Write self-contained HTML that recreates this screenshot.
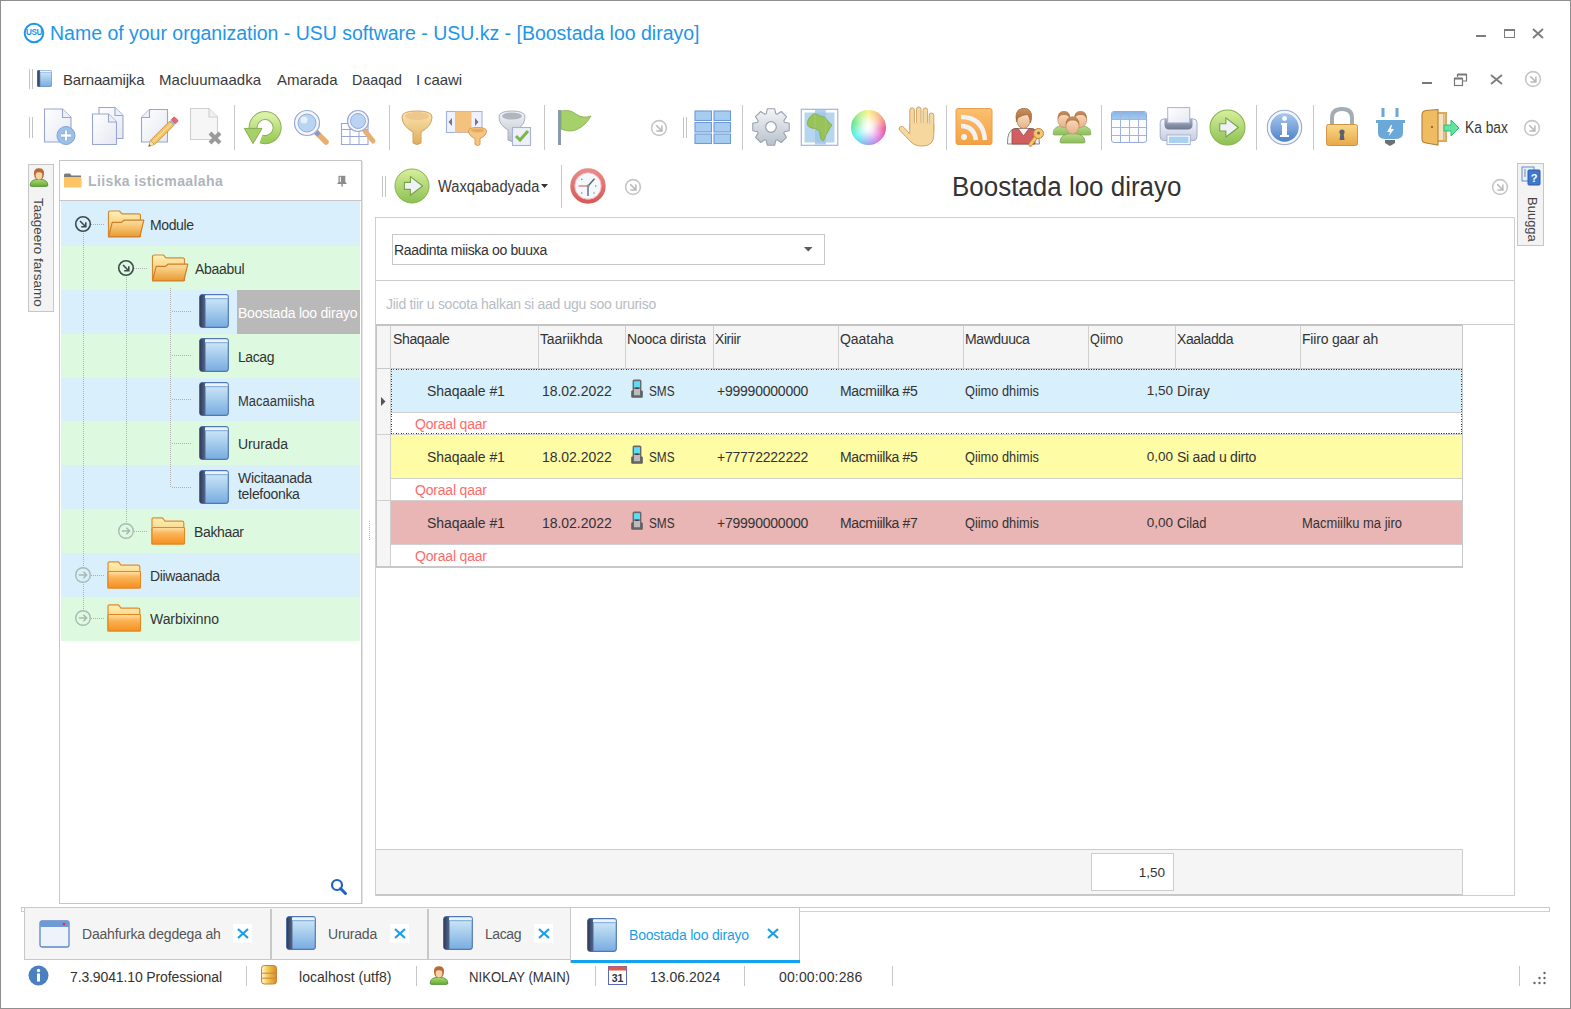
<!DOCTYPE html>
<html><head><meta charset="utf-8"><style>
*{margin:0;padding:0;box-sizing:border-box}
html,body{width:1571px;height:1009px;overflow:hidden;background:#fff}
body{position:relative;font-family:"Liberation Sans",sans-serif;font-size:13.5px;color:#3a3a3a}
.a{position:absolute}
.t{position:absolute;white-space:nowrap;line-height:1}
.sep{position:absolute;width:1px;background:#c8c8c8}
.grip{position:absolute;width:4px;border-left:1px solid #c4c4c4;border-right:1px solid #c4c4c4}
.vdot{position:absolute;width:1px;background:repeating-linear-gradient(#b0b0b0 0 1px,transparent 1px 2px)}
.hdot{position:absolute;height:1px;background:repeating-linear-gradient(90deg,#b0b0b0 0 1px,transparent 1px 2px)}
.hl{position:absolute;height:1px;background:#cdcdcd}
.vl{position:absolute;width:1px;background:#cdcdcd}
</style></head><body>
<svg width="0" height="0" style="position:absolute">
<defs>
<linearGradient id="gBook" x1="0" y1="0" x2="0" y2="1"><stop offset="0" stop-color="#d4ecfa"/><stop offset="1" stop-color="#78ace0"/></linearGradient>
<linearGradient id="gSpine" x1="0" y1="0" x2="1" y2="0"><stop offset="0" stop-color="#2e3a58"/><stop offset="1" stop-color="#55688e"/></linearGradient>
<linearGradient id="gFoldBack" x1="0" y1="0" x2="0" y2="1"><stop offset="0" stop-color="#fff2b8"/><stop offset="1" stop-color="#f0b452"/></linearGradient>
<linearGradient id="gFoldFront" x1="0" y1="0" x2="0" y2="1"><stop offset="0" stop-color="#fde0a0"/><stop offset="1" stop-color="#e99a32"/></linearGradient>
<linearGradient id="gFoldFront2" x1="0" y1="0" x2="0" y2="1"><stop offset="0" stop-color="#ffe2a8"/><stop offset="0.35" stop-color="#fbb458"/><stop offset="1" stop-color="#f59020"/></linearGradient>
<linearGradient id="gGreen" x1="0" y1="0" x2="0" y2="1"><stop offset="0" stop-color="#d8ef9c"/><stop offset="1" stop-color="#8cc054"/></linearGradient>
<radialGradient id="gWheel" cx="0.5" cy="0.5" r="0.5"><stop offset="0" stop-color="#fff"/><stop offset="1" stop-color="#fff" stop-opacity="0"/></radialGradient>
<linearGradient id="gGold" x1="0" y1="0" x2="0" y2="1"><stop offset="0" stop-color="#fbe6b4"/><stop offset="1" stop-color="#e2ad5c"/></linearGradient>
<linearGradient id="gSilver" x1="0" y1="0" x2="0" y2="1"><stop offset="0" stop-color="#f4f6f8"/><stop offset="1" stop-color="#b8c0ca"/></linearGradient>
<linearGradient id="gPaper" x1="0" y1="0" x2="1" y2="1"><stop offset="0" stop-color="#ffffff"/><stop offset="1" stop-color="#e4e8f2"/></linearGradient>
<linearGradient id="gBlueBall" x1="0" y1="0" x2="0" y2="1"><stop offset="0" stop-color="#a8c8ee"/><stop offset="1" stop-color="#4f82c8"/></linearGradient>
<linearGradient id="gLock" x1="0" y1="0" x2="0" y2="1"><stop offset="0" stop-color="#f8d888"/><stop offset="1" stop-color="#e8a848"/></linearGradient>
<linearGradient id="gRss" x1="0" y1="0" x2="0" y2="1"><stop offset="0" stop-color="#fbc070"/><stop offset="1" stop-color="#f5a040"/></linearGradient>

<symbol id="book" viewBox="0 0 30 34">
 <rect x="0.7" y="0.7" width="28.6" height="32.6" rx="2.5" fill="url(#gBook)" stroke="#4f78b6" stroke-width="1.2"/>
 <path d="M0.7 3.2Q0.7 0.7 3.2 0.7H6.5V33.3H3.2Q0.7 33.3 0.7 30.8Z" fill="url(#gSpine)"/>
 <rect x="6" y="1.6" width="22.6" height="2.6" fill="#eef2f6"/>
 <rect x="6" y="4.2" width="22.6" height="1" fill="#7ea8d8"/>
</symbol>

<symbol id="folderOpen" viewBox="0 0 38 28">
 <path d="M1.5 26.5V3Q1.5 1 3.5 1H12.5L15 3.8H31.5Q33.5 3.8 33.5 5.8V26.5Z" fill="url(#gFoldBack)" stroke="#d38a32" stroke-width="1.2"/>
 <path d="M1.5 26.8L5.2 12.3H14.5L17 10.2H36.8L32.8 26.8Z" fill="url(#gFoldFront)" stroke="#d07f28" stroke-width="1.2" stroke-linejoin="round"/>
</symbol>

<symbol id="folder" viewBox="0 0 34 28">
 <path d="M1 27V2.5Q1 0.8 2.7 0.8H11.5L14 4.2H31Q32.8 4.2 32.8 6V27Z" fill="url(#gFoldBack)" stroke="#e38a2c" stroke-width="1.2"/>
 <rect x="1" y="10.5" width="32.6" height="16.5" rx="1.2" fill="url(#gFoldFront2)" stroke="#e5861e" stroke-width="1.2"/>
</symbol>

<symbol id="expDark" viewBox="0 0 18 18">
 <circle cx="9" cy="9" r="7.3" fill="none" stroke="#3e4a4c" stroke-width="1.6"/>
 <path d="M6 6L11.2 11.2M11.8 7.2V11.8H7.2" fill="none" stroke="#3e4a4c" stroke-width="1.6"/>
</symbol>
<symbol id="expLight" viewBox="0 0 18 18">
 <circle cx="9" cy="9" r="7.3" fill="none" stroke="#a9b9b2" stroke-width="1.4"/>
 <path d="M4.8 9H12.5M9.4 5.8L12.6 9L9.4 12.2" fill="none" stroke="#a9b9b2" stroke-width="1.5"/>
</symbol>
<symbol id="circArrow" viewBox="0 0 18 18">
 <circle cx="9" cy="9" r="7.4" fill="none" stroke="#c6c6c6" stroke-width="1.6"/>
 <path d="M6.2 6.2L11.4 11.4M11.9 6.4V11.9H6.4" fill="none" stroke="#b8b8b8" stroke-width="1.5"/>
</symbol>

<symbol id="greenArrow" viewBox="0 0 36 36">
 <circle cx="18" cy="18" r="17" fill="url(#gGreen)" stroke="#84b44c" stroke-width="1"/>
 <path d="M10.4 14.4H16.4V8.6L28.6 18L16.4 27.2V21.4H10.4Z" fill="#eef1f6" stroke="#79a247" stroke-width="1.1" stroke-linejoin="round"/>
</symbol>

<symbol id="clock" viewBox="0 0 36 36">
 <defs><linearGradient id="gRing" x1="0" y1="0" x2="0" y2="1"><stop offset="0" stop-color="#e98a88"/><stop offset="1" stop-color="#d95a58"/></linearGradient></defs>
 <circle cx="18" cy="18" r="15.5" fill="#f4f7fb" stroke="url(#gRing)" stroke-width="4.4"/>
 <circle cx="18" cy="18" r="13.2" fill="none" stroke="#f3b8b6" stroke-width="0.9"/>
 <path d="M18 18L24.5 10.8" stroke="#556270" stroke-width="1.3"/>
 <path d="M18 18V28" stroke="#8a94a0" stroke-width="2"/>
 <path d="M8.5 18H18" stroke="#e06a6a" stroke-width="1.2"/>
 <circle cx="18" cy="18" r="1.5" fill="#8a94a0"/>
 <g fill="#6a7888"><circle cx="11.8" cy="11.2" r="0.7"/><circle cx="25.8" cy="18" r="0.7"/><circle cx="11.8" cy="25" r="0.7"/><circle cx="24" cy="25" r="0.7"/></g>
</symbol>

<symbol id="user" viewBox="0 0 20 20">
 <defs><linearGradient id="gUB" x1="0" y1="0" x2="0" y2="1"><stop offset="0" stop-color="#a8dc6c"/><stop offset="1" stop-color="#68a83c"/></linearGradient></defs>
 <path d="M1.2 18.2Q1.2 12.2 10 12.2Q18.8 12.2 18.8 18.2Q18.8 19.4 17 19.4H3Q1.2 19.4 1.2 18.2Z" fill="url(#gUB)" stroke="#4e8a2a" stroke-width="0.8"/>
 <path d="M5 7Q4.5 1.2 10 1.2Q15.5 1.2 15 7Q15 11 12.5 12.8H7.5Q5 11 5 7Z" fill="#b86a34"/>
 <ellipse cx="10" cy="8.2" rx="3.3" ry="4.2" fill="#f6d2a8"/>
 <path d="M6.5 6.5Q7 3.5 10 3.6Q13 3.5 13.5 6.5Q12 5 10 5.2Q8 5 6.5 6.5Z" fill="#b86a34"/>
</symbol>
</defs></svg>
<svg width="0" height="0" style="position:absolute"><defs>
<symbol id="phone" viewBox="0 0 12 19">
 <rect x="0.2" y="11.5" width="11.6" height="7.3" rx="1" fill="#5e5e5e"/>
 <rect x="1.6" y="0.4" width="8.8" height="17.4" rx="1.6" fill="#686868"/>
 <rect x="3" y="2.2" width="6" height="6.2" fill="#5cdcf8"/>
 <rect x="3" y="9.8" width="6" height="6.4" fill="#bcbcbc"/>
 <rect x="4.3" y="8.6" width="3.4" height="1.3" fill="#3a3a3a"/>
</symbol>
<symbol id="winIcon" viewBox="0 0 31 28">
 <rect x="1" y="1" width="29" height="26" rx="2" fill="#eef2fa" stroke="#5f86c6" stroke-width="1.3"/>
 <path d="M1 3Q1 1 3 1H28Q30 1 30 3V7H1Z" fill="#6f9ad8"/>
 <circle cx="25" cy="4" r="1.3" fill="#e83030"/>
</symbol>
</defs></svg>

<div class="a" style="left:0;top:0;width:1571px;height:1009px;border:1px solid #8f8f8f"></div>
<svg class="a" style="left:23px;top:22px" width="22" height="22" viewBox="0 0 22 22"><circle cx="11" cy="11" r="9.3" fill="none" stroke="#1e96e8" stroke-width="2"/><text x="11" y="13.4" font-family="Liberation Sans" font-weight="bold" font-size="8.2" letter-spacing="-0.4" fill="#1e96e8" text-anchor="middle">USU</text></svg>
<div class="t" style="left:50px;top:24px;font-size:19.5px;color:#1e96e8;letter-spacing:-0.011px">Name of your organization - USU software - USU.kz - [Boostada loo dirayo]</div>
<div class="a" style="left:1476px;top:35px;width:10px;height:2px;background:#7c7c7c"></div>
<div class="a" style="left:1504px;top:29px;width:11px;height:9px;border:1px solid #7c7c7c;border-top-width:2px"></div>
<svg class="a" style="left:1532px;top:28px" width="12" height="11"><path d="M1 1L11 10M11 1L1 10" stroke="#7c7c7c" stroke-width="1.8"/></svg>
<div class="grip" style="left:29px;top:69px;height:20px"></div>
<svg class="a" style="left:37px;top:70px" width="15" height="17"><use href="#book"/></svg>
<div class="t" style="left:63px;top:72px;font-size:15px;letter-spacing:-0.188px">Barnaamijka</div>
<div class="t" style="left:159px;top:72px;font-size:15px;letter-spacing:0.026px">Macluumaadka</div>
<div class="t" style="left:277px;top:72px;font-size:15px;letter-spacing:-0.062px">Amarada</div>
<div class="t" style="left:352px;top:72px;font-size:15px;transform:scaleX(0.9501);transform-origin:0 0">Daaqad</div>
<div class="t" style="left:416px;top:72px;font-size:15px;letter-spacing:-0.115px">I caawi</div>
<div class="a" style="left:1422px;top:82px;width:10px;height:2px;background:#777"></div>
<svg class="a" style="left:1453px;top:73px" width="15" height="14"><path d="M4.5 4V1.5h9v6.5h-3.5" fill="none" stroke="#777" stroke-width="1.2"/><path d="M4.5 1.5h9" stroke="#777" stroke-width="2"/><rect x="1.5" y="5.5" width="8" height="7" fill="none" stroke="#777" stroke-width="1.2"/><path d="M1.5 5.5h8" stroke="#777" stroke-width="2"/></svg>
<svg class="a" style="left:1490px;top:74px" width="13" height="11"><path d="M1 1L12 10M12 1L1 10" stroke="#7c7c7c" stroke-width="1.8"/></svg>
<svg class="a" style="left:1524px;top:70px" width="18" height="18"><use href="#circArrow"/></svg>
<div class="grip" style="left:29px;top:117px;height:21px"></div>
<!-- new doc -->
<svg class="a" style="left:43px;top:106px" width="36" height="42" viewBox="0 0 36 42"><path d="M1.5 3H19.5L28 11.5V36H1.5Z" fill="url(#gPaper)" stroke="#9aa6d0" stroke-width="1.1"/><path d="M19.5 3V11.5H28" fill="#eef0f8" stroke="#9aa6d0" stroke-width="1.1"/><circle cx="23" cy="29.5" r="9" fill="#9cc0ea" stroke="#7aa4d8" stroke-width="1"/><path d="M23 24.5V34.5M18 29.5H28" stroke="#7aa4d8" stroke-width="4"/><path d="M23 24.5V34.5M18 29.5H28" stroke="#fff" stroke-width="2.4"/></svg>
<!-- copy -->
<svg class="a" style="left:91px;top:106px" width="36" height="42" viewBox="0 0 36 42"><path d="M8 1.5H24L32 9.5V32.5H8Z" fill="url(#gPaper)" stroke="#9aa6d0" stroke-width="1.1"/><path d="M24 1.5V9.5H32" fill="#eef0f8" stroke="#9aa6d0" stroke-width="1.1"/><path d="M1.5 8H17.5L25.5 16V38.5H1.5Z" fill="url(#gPaper)" stroke="#9aa6d0" stroke-width="1.1"/><path d="M17.5 8V16H25.5" fill="#eef0f8" stroke="#9aa6d0" stroke-width="1.1"/></svg>
<!-- edit -->
<svg class="a" style="left:140px;top:106px" width="40" height="44" viewBox="0 0 40 44"><path d="M9.5 3.5H27.5V36H1.5V11.5Z" fill="url(#gPaper)" stroke="#9aa6d0" stroke-width="1.1"/><path d="M1.5 11.5H9.5V3.5" fill="#eef0f8" stroke="#9aa6d0" stroke-width="1.1"/><path d="M10.4 34.4L29.6 15.2L33.8 19.4L14.6 38.6Z" fill="#f2c464" stroke="#c8903c" stroke-width="0.9"/><path d="M12.5 36.5L31.7 17.3" stroke="#f8dc98" stroke-width="1.2"/><path d="M29.6 15.2L31.4 13.4L35.6 17.6L33.8 19.4Z" fill="#9ab2d8"/><path d="M31.4 13.4L33.2 11.6Q34.2 10.6 35.3 11.7L37.3 13.7Q38.4 14.8 37.4 15.8L35.6 17.6Z" fill="#e86a6a" stroke="#c85050" stroke-width="0.8"/><path d="M10.4 34.4L14.6 38.6L8.6 40.4Z" fill="#f4e0b8" stroke="#b89060" stroke-width="0.6"/><path d="M9.3 38.2L10.8 39.7L8.6 40.4Z" fill="#555"/></svg>
<!-- delete -->
<svg class="a" style="left:189px;top:106px" width="36" height="40" viewBox="0 0 36 40"><path d="M1.5 2.5H20L28.5 11V33.5H1.5Z" fill="#f6f6f6" stroke="#cfcfcf" stroke-width="1.1"/><path d="M20 2.5V11H28.5" fill="#f0f0f0" stroke="#cfcfcf" stroke-width="1.1"/><path d="M21 27L31 37M31 27L21 37" stroke="#9a9a9a" stroke-width="4"/></svg>
<!-- refresh -->
<svg class="a" style="left:238px;top:106px" width="50" height="44" viewBox="0 0 50 44"><defs><linearGradient id="gRef" x1="0" y1="0" x2="0" y2="1"><stop offset="0" stop-color="#dcf0a8"/><stop offset="1" stop-color="#9ccc5c"/></linearGradient></defs><path d="M15.2 23A12 12 0 1 1 23.1 32.9" fill="none" stroke="#8cb456" stroke-width="9"/><path d="M15.2 23A12 12 0 1 1 23.1 32.9" fill="none" stroke="url(#gRef)" stroke-width="7"/><path d="M6.3 22.4H24L15 37.6Z" fill="#a6d06a" stroke="#86ae50" stroke-width="1" stroke-linejoin="round"/></svg>
<!-- magnifier -->
<svg class="a" style="left:293px;top:109px" width="38" height="38" viewBox="0 0 38 38"><path d="M23 23L33 33" stroke="#e8b070" stroke-width="5.5" stroke-linecap="round"/><path d="M22 22L26 26" stroke="#8a9ac8" stroke-width="5"/><circle cx="14" cy="14" r="12.5" fill="#f4f6fa" stroke="#9aa8d2" stroke-width="1.2"/><circle cx="14" cy="14" r="9" fill="#b8d4f2" stroke="#8eaedc" stroke-width="1"/><circle cx="11" cy="11" r="3.5" fill="#e6f0fb"/></svg>
<!-- grid magnifier -->
<svg class="a" style="left:340px;top:109px" width="40" height="38" viewBox="0 0 40 38"><path d="M1.5 14.5H28V35.5H1.5Z" fill="#fff" stroke="#9aa6d8" stroke-width="1.1"/><path d="M1.5 20.5H28M1.5 27.5H28M10 14.5V35.5M19 14.5V35.5" stroke="#9aa6d8" stroke-width="1"/><path d="M25 22L33 32" stroke="#e8b070" stroke-width="5" stroke-linecap="round"/><circle cx="18" cy="12" r="10.5" fill="#f4f6fa" stroke="#9aa8d2" stroke-width="1.2"/><circle cx="18" cy="12" r="7.5" fill="#b8d4f2" stroke="#8eaedc" stroke-width="1"/></svg>
<!-- funnel -->
<svg class="a" style="left:400px;top:109px" width="34" height="38" viewBox="0 0 34 38"><path d="M2 8Q2 2 17 2Q32 2 32 8Q32 17 21 23V34Q17 37 13 34V23Q2 17 2 8Z" fill="url(#gGold)" stroke="#d2a060" stroke-width="1"/><ellipse cx="17" cy="7" rx="12" ry="4" fill="#eec78a"/></svg>
<!-- column filter -->
<svg class="a" style="left:445px;top:110px" width="44" height="38" viewBox="0 0 44 38"><rect x="1.5" y="1.5" width="35.5" height="21" fill="#eef2fa" stroke="#a6b2dc" stroke-width="1.1"/><rect x="10" y="1.5" width="16.5" height="21" fill="#f2c27e"/><path d="M7 8V16L3.5 12Z M30 8V16L33.5 12Z" fill="#6a7890"/><path d="M23.5 21Q23.5 17.5 32.5 17.5Q41.5 17.5 41.5 21Q41.5 25.5 35 28.5V34.5Q32.5 36.5 30 34.5V28.5Q23.5 25.5 23.5 21Z" fill="#f5c680" stroke="#d89a50" stroke-width="1"/><ellipse cx="32.5" cy="20.5" rx="6.5" ry="1.8" fill="#e8a860"/></svg>
<!-- gray funnel check -->
<svg class="a" style="left:497px;top:108px" width="38" height="40" viewBox="0 0 38 40"><path d="M2 9Q2 3 15 3Q28 3 28 9Q28 17 19 22V32Q15 35 11 32V22Q2 17 2 9Z" fill="url(#gSilver)" stroke="#a8b0ba" stroke-width="1"/><ellipse cx="15" cy="8" rx="10" ry="3.6" fill="#aeb6c0"/><rect x="15.5" y="19.5" width="18" height="18" fill="#eef0f8" stroke="#a6b2dc" stroke-width="1.1"/><path d="M19 28L23 32L31 23" fill="none" stroke="#7ab648" stroke-width="3"/></svg>
<!-- flag -->
<svg class="a" style="left:556px;top:109px" width="38" height="38" viewBox="0 0 38 38"><rect x="2" y="1" width="3" height="35" fill="#8a98b4"/><path d="M5 2Q14 0 20 5Q27 10 35 7Q30 16 22 20Q15 24 5 20Z" fill="#a6d06a" stroke="#86b048" stroke-width="0.8"/></svg>
<!-- grid6 -->
<svg class="a" style="left:694px;top:110px" width="38" height="36" viewBox="0 0 38 36"><g fill="#a6cdf0" stroke="#6f9ad6" stroke-width="1.1"><rect x="1" y="1" width="16.5" height="9.5"/><rect x="20" y="1" width="16.5" height="9.5"/><rect x="1" y="12.5" width="16.5" height="9.5"/><rect x="20" y="12.5" width="16.5" height="9.5"/><rect x="1" y="24" width="16.5" height="9.5"/><rect x="20" y="24" width="16.5" height="9.5"/></g></svg>
<!-- gear -->
<svg class="a" style="left:751px;top:107px" width="40" height="41" viewBox="0 0 40 41"><path d="M15.26 6.61L16.30 1.77L23.70 1.77L24.74 6.61L26.12 7.19L30.28 4.50L35.50 9.72L32.81 13.88L33.39 15.26L38.23 16.30L38.23 23.70L33.39 24.74L32.81 26.12L35.50 30.28L30.28 35.50L26.12 32.81L24.74 33.39L23.70 38.23L16.30 38.23L15.26 33.39L13.88 32.81L9.72 35.50L4.50 30.28L7.19 26.12L6.61 24.74L1.77 23.70L1.77 16.30L6.61 15.26L7.19 13.88L4.50 9.72L9.72 4.50L13.88 7.19Z" fill="url(#gSilver)" stroke="#9aa2ae" stroke-width="1.1" stroke-linejoin="round"/><circle cx="20" cy="20" r="5.3" fill="#fff" stroke="#9aa2ae" stroke-width="1.2"/></svg>
<!-- map -->
<svg class="a" style="left:800px;top:107px" width="40" height="41" viewBox="0 0 40 41"><rect x="1.3" y="2.3" width="36.5" height="36" fill="#fff" stroke="#a6b2dc" stroke-width="1.2"/><rect x="4.5" y="5.5" width="30" height="30" fill="#b6d6f0"/><rect x="15" y="3" width="10.8" height="34.5" fill="#9cc4e6" opacity="0.8"/><path d="M7.7 14Q9 10 11.2 8.9Q13 6.5 15 6.7Q18 7.5 20.1 8.9Q23 9.5 24.6 10.2Q27 12 27.8 14Q30 16.5 31.9 17.8Q30.5 20.5 29 22.9Q27 26 25.8 28.6Q24.5 32 23.3 33.7Q21.5 33.5 20.7 31.2Q20 27 19.5 24.8Q17.5 22.2 15 21.6Q12 21.2 9.9 20.4Q7.5 19 7.4 17.2Z" fill="#98c25a" stroke="#82ac48" stroke-width="0.8"/><path d="M15 7V21.6M25.8 10.5V28.6" stroke="#c8e08c" stroke-width="0.6" opacity="0.5"/></svg>
<!-- color wheel -->
<div class="a" style="left:851px;top:110px;width:35px;height:35px;border-radius:50%;background:conic-gradient(from 0deg,#f8f070,#f8a070 50deg,#e8408a 95deg,#d860e0 140deg,#7aa8f0 190deg,#40f0f0 235deg,#50e070 290deg,#b8f080 330deg,#f8f070)"></div>
<div class="a" style="left:851px;top:110px;width:35px;height:35px;border-radius:50%;background:radial-gradient(circle at 50% 50%,#fff 0,rgba(255,255,255,0.85) 20%,rgba(255,255,255,0.2) 62%,rgba(255,255,255,0) 80%)"></div>
<!-- hand -->
<svg class="a" style="left:897px;top:106px" width="40" height="42" viewBox="0 0 40 42"><g fill="#f6d89e" stroke="#cfa468" stroke-width="1"><rect x="12.8" y="1.8" width="4.6" height="24" rx="2.3"/><rect x="19.4" y="1" width="4.6" height="24" rx="2.3"/><rect x="26" y="2" width="4.6" height="24" rx="2.3"/><rect x="32.2" y="7" width="4.6" height="20" rx="2.3"/><path d="M12.8 18H36.8V29Q36.8 40 25 40Q17 40 13 35L2.5 24Q1 21.5 3.5 20.5Q5.5 19.8 7.5 22L12.8 28Z"/></g><path d="M13.4 18H36.2" stroke="#f6d89e" stroke-width="1.8"/></svg>
<!-- rss -->
<svg class="a" style="left:955px;top:107px" width="38" height="39" viewBox="0 0 38 39"><rect x="1" y="1.5" width="36" height="36" rx="2" fill="url(#gRss)" stroke="#e8a050" stroke-width="1"/><path d="M6 10Q28 10 30 33" fill="none" stroke="#f2f2f4" stroke-width="4.5"/><path d="M6 19Q19 19 21 33" fill="none" stroke="#f2f2f4" stroke-width="4.5"/><circle cx="9" cy="30" r="3" fill="#f2f2f4"/></svg>
<!-- user key -->
<svg class="a" style="left:1005px;top:106px" width="40" height="42" viewBox="0 0 40 42"><defs><linearGradient id="gHair" x1="0" y1="0" x2="0" y2="1"><stop offset="0" stop-color="#c89060"/><stop offset="1" stop-color="#a86838"/></linearGradient><linearGradient id="gSkin" x1="0" y1="0" x2="0" y2="1"><stop offset="0" stop-color="#fbe0c4"/><stop offset="1" stop-color="#e8b088"/></linearGradient></defs>
<path d="M2.5 38Q2 25 9 22.5H28Q34 25 34.5 38Z" fill="#f4f4f4" stroke="#8a8a8a" stroke-width="1"/>
<path d="M7 38V24Q10 22.5 13 22.5L18.5 30L24 22.5Q27 22.5 30 24V38Z" fill="#d06060" stroke="#9a4848" stroke-width="0.8"/>
<ellipse cx="18.5" cy="14.5" rx="6.5" ry="8" fill="url(#gSkin)" stroke="#b88058" stroke-width="0.8"/>
<path d="M11.5 16Q9 4 17 2.5Q25 1.5 26.5 8Q27 13 25.5 17Q25 10 22 8.5Q17 9 12.5 12Z" fill="url(#gHair)" stroke="#9a6238" stroke-width="0.6"/>
<path d="M31 31L25.5 38.5" stroke="#c08838" stroke-width="4.2" stroke-linecap="round"/><path d="M31 31L25.5 38.5" stroke="#f4c870" stroke-width="2.6" stroke-linecap="round"/>
<circle cx="33.5" cy="27.5" r="5" fill="#f4c870" stroke="#c08838" stroke-width="1"/><circle cx="33.5" cy="27" r="1.5" fill="#8a6a60"/></svg>
<!-- users -->
<svg class="a" style="left:1052px;top:109px" width="40" height="36" viewBox="0 0 40 36"><defs><linearGradient id="gBody" x1="0" y1="0" x2="0" y2="1"><stop offset="0" stop-color="#b8dc88"/><stop offset="1" stop-color="#8cbc5c"/></linearGradient></defs>
<path d="M1 25Q1 16.5 12 16.5Q23 16.5 23 25Q23 26 21 26H3Q1 26 1 25Z" fill="url(#gBody)" stroke="#88b060" stroke-width="0.8"/>
<path d="M16 25Q16 16.5 27.5 16.5Q39 16.5 39 25Q39 26 37 26H18Q16 26 16 25Z" fill="url(#gBody)" stroke="#88b060" stroke-width="0.8"/>
<ellipse cx="12" cy="10.5" rx="6.2" ry="8" fill="url(#gSkin)" stroke="#c09070" stroke-width="0.7"/><path d="M5.8 11Q5 2 12 2Q19 2 18.2 11Q17 5.5 12 6Q7 5.5 5.8 11Z" fill="url(#gHair)"/>
<ellipse cx="28.5" cy="10.5" rx="6.2" ry="8" fill="url(#gSkin)" stroke="#c09070" stroke-width="0.7"/><path d="M22.3 11Q21.5 2 28.5 2Q35.5 2 34.7 11Q33.5 5.5 28.5 6Q23.5 5.5 22.3 11Z" fill="url(#gHair)"/>
<path d="M8 33Q8 24.5 20.5 24.5Q33 24.5 33 33Q33 34 31 34H10Q8 34 8 33Z" fill="url(#gBody)" stroke="#80a858" stroke-width="0.8"/>
<ellipse cx="20.5" cy="16.5" rx="6.6" ry="8.6" fill="url(#gSkin)" stroke="#c09070" stroke-width="0.7"/><path d="M13.9 17Q13 7.5 20.5 7.5Q28 7.5 27.1 17Q26 11 20.5 11.5Q15 11 13.9 17Z" fill="url(#gHair)"/></svg>
<!-- table -->
<svg class="a" style="left:1110px;top:110px" width="38" height="35" viewBox="0 0 38 35"><defs><linearGradient id="gTH" x1="0" y1="0" x2="0" y2="1"><stop offset="0" stop-color="#86b6e6"/><stop offset="1" stop-color="#a4ccf0"/></linearGradient></defs><rect x="1.5" y="1.5" width="35" height="31" rx="2.5" fill="#fbfcff" stroke="#98a8da" stroke-width="1"/><path d="M2 4Q2 2 4 2H34Q36 2 36 4V9.5H2Z" fill="url(#gTH)"/><path d="M1.5 9.5H36.5M1.5 17.5H36.5M1.5 25.5H36.5M10.5 1.5V32.5M19.5 1.5V32.5M28.5 1.5V32.5" stroke="#a4b2e0" stroke-width="1"/></svg>
<!-- printer -->
<svg class="a" style="left:1159px;top:106px" width="40" height="41" viewBox="0 0 40 41"><defs><linearGradient id="gPrB" x1="0" y1="0" x2="0" y2="1"><stop offset="0" stop-color="#f6f8fc"/><stop offset="1" stop-color="#c6cce0"/></linearGradient><linearGradient id="gPrS" x1="0" y1="0" x2="0" y2="1"><stop offset="0" stop-color="#a8b0c4"/><stop offset="1" stop-color="#6e7890"/></linearGradient></defs>
<rect x="1.2" y="12.8" width="36.8" height="21.8" rx="4" fill="url(#gPrB)" stroke="#a4acd0" stroke-width="1"/>
<path d="M5.5 13H33.5V18.5Q33.5 23.5 28.5 23.5H10.5Q5.5 23.5 5.5 18.5Z" fill="url(#gPrS)"/>
<rect x="8.7" y="1.6" width="22" height="15.3" fill="url(#gPaper)" stroke="#a8b2d4" stroke-width="1"/>
<rect x="8" y="29" width="23.3" height="9.6" fill="#fff" stroke="#a6b0d0" stroke-width="1"/><rect x="9.8" y="30.6" width="19.7" height="6.4" fill="#a8d2f0"/></svg>
<!-- green arrow 2 -->
<svg class="a" style="left:1209px;top:109px" width="37" height="37"><use href="#greenArrow"/></svg>
<!-- info -->
<svg class="a" style="left:1266px;top:109px" width="37" height="37" viewBox="0 0 37 37"><circle cx="18.5" cy="18.5" r="17.2" fill="#f4f6fa" stroke="#9aa8d0" stroke-width="1.1"/><circle cx="18.5" cy="18.5" r="14.2" fill="url(#gBlueBall)"/><circle cx="18.5" cy="9.5" r="2.4" fill="#fff"/><path d="M15 14H21V26H23V28H14V26H16V16H15Z" fill="#fff"/></svg>
<!-- lock -->
<svg class="a" style="left:1325px;top:107px" width="34" height="40" viewBox="0 0 34 40"><path d="M7 18V11Q7 2 17 2Q27 2 27 11V18" fill="none" stroke="#a4acb4" stroke-width="4"/><rect x="1.5" y="17.5" width="31" height="21" rx="2" fill="url(#gLock)" stroke="#d09448" stroke-width="1"/><circle cx="17" cy="25" r="2.6" fill="#5a6270"/><path d="M15.5 26L14.5 33H19.5L18.5 26Z" fill="#5a6270"/></svg>
<!-- plug -->
<svg class="a" style="left:1375px;top:107px" width="32" height="40" viewBox="0 0 32 40"><path d="M8 1V10M22 1V10" stroke="#6aa8d8" stroke-width="3"/><path d="M1 13H30V16H28V26Q28 32 20 32H11Q3 32 3 26V16H1Z" fill="#6aa8d8"/><path d="M16 18L12 25H15L14 29L19 22H16L17 18Z" fill="#fff"/><path d="M10 33H20V36L15 39L10 36Z" fill="#6a707a"/></svg>
<!-- door -->
<svg class="a" style="left:1420px;top:109px" width="42" height="37" viewBox="0 0 42 37"><rect x="15" y="4" width="9" height="28" fill="#f5e2bc" stroke="#c08c48" stroke-width="1"/><rect x="15" y="4" width="11" height="28" fill="none" stroke="#e0a858" stroke-width="2"/><path d="M2 6Q2 2 6 1.5L18 0.5V36L6 34Q2 33.5 2 30Z" fill="#f0bc62" stroke="#b0803a" stroke-width="1.1"/><circle cx="12" cy="18" r="1.2" fill="#9a6a30"/><path d="M24 16H31V11L39 19L31 27V22H24Z" fill="#5ee6a0" stroke="#3cb878" stroke-width="1"/></svg>

<div class="sep" style="left:234px;top:105px;height:45px"></div>
<div class="sep" style="left:389px;top:105px;height:45px"></div>
<div class="sep" style="left:544px;top:105px;height:45px"></div>
<div class="sep" style="left:742px;top:105px;height:45px"></div>
<div class="sep" style="left:946px;top:105px;height:45px"></div>
<div class="sep" style="left:1101px;top:105px;height:45px"></div>
<div class="sep" style="left:1256px;top:105px;height:45px"></div>
<div class="sep" style="left:1313px;top:105px;height:45px"></div>
<svg class="a" style="left:650px;top:119px" width="18" height="18"><use href="#circArrow"/></svg>
<div class="grip" style="left:683px;top:117px;height:21px"></div>
<div class="t" style="left:1465px;top:120px;font-size:16px;transform:scaleX(0.8590);transform-origin:0 0">Ka bax</div>
<svg class="a" style="left:1523px;top:119px" width="18" height="18"><use href="#circArrow"/></svg>
<div class="a" style="left:28px;top:164px;width:26px;height:148px;background:#f3f3f3;border:1px solid #c6c6c6"></div>
<svg class="a" style="left:29px;top:167px" width="20" height="20"><use href="#user"/></svg>
<div class="t" style="left:31.5px;top:198px;font-size:13.5px;writing-mode:vertical-rl;color:#444">Taageero farsamo</div>
<div class="a" style="left:59px;top:160px;width:303px;height:744px;border:1px solid #c6c6c6;background:#fff"></div>
<div class="hl" style="left:60px;top:200px;width:302px;background:#c6c6c6"></div>
<div class="vl" style="left:362px;top:161px;height:743px;background:#e4e4e4"></div>
<svg class="a" style="left:64px;top:173px" width="18" height="15"><path d="M0 2Q0 0.5 1.5 0.5H6L7.5 2.5H17V14H0Z" fill="#7a7a7a"/><rect x="0" y="4" width="17.5" height="10.5" fill="#fdc463"/></svg>
<div class="t" style="left:88px;top:174px;font-size:14px;color:#b0b4bc;font-weight:bold;letter-spacing:0.392px">Liiska isticmaalaha</div>
<svg class="a" style="left:336px;top:175px" width="12" height="13"><rect x="2.5" y="0.8" width="6.8" height="7" fill="#8c8c8c"/><rect x="3.8" y="1.8" width="1.2" height="5.2" fill="#f4f4f4"/><path d="M1 9H11L9.3 7H2.7Z" fill="#8c8c8c"/><rect x="5.4" y="9" width="1.4" height="2.6" fill="#8c8c8c"/></svg>
<div class="a" style="left:61px;top:201px;width:299px;height:45px;background:#d9f0fc"></div>
<div class="a" style="left:61px;top:246px;width:299px;height:44px;background:#ddfae1"></div>
<div class="a" style="left:61px;top:290px;width:299px;height:44px;background:#d9f0fc"></div>
<div class="a" style="left:61px;top:334px;width:299px;height:44px;background:#ddfae1"></div>
<div class="a" style="left:61px;top:378px;width:299px;height:43px;background:#d9f0fc"></div>
<div class="a" style="left:61px;top:421px;width:299px;height:44px;background:#ddfae1"></div>
<div class="a" style="left:61px;top:465px;width:299px;height:44px;background:#d9f0fc"></div>
<div class="a" style="left:61px;top:509px;width:299px;height:44px;background:#ddfae1"></div>
<div class="a" style="left:61px;top:553px;width:299px;height:44px;background:#d9f0fc"></div>
<div class="a" style="left:61px;top:597px;width:299px;height:44px;background:#ddfae1"></div>
<div class="a" style="left:237px;top:290px;width:123px;height:44px;background:#b9b9b9"></div>
<div class="vdot" style="left:83px;top:233px;height:334px"></div>
<div class="vdot" style="left:83px;top:584px;height:26px"></div>
<div class="vdot" style="left:126px;top:277px;height:246px"></div>
<div class="vdot" style="left:170px;top:288px;height:199px"></div>
<div class="hdot" style="left:91px;top:224px;width:14px"></div>
<div class="hdot" style="left:91px;top:575px;width:14px"></div>
<div class="hdot" style="left:91px;top:618px;width:14px"></div>
<div class="hdot" style="left:134px;top:268px;width:14px"></div>
<div class="hdot" style="left:134px;top:531px;width:14px"></div>
<div class="hdot" style="left:172px;top:311px;width:20px"></div>
<div class="hdot" style="left:172px;top:355px;width:20px"></div>
<div class="hdot" style="left:172px;top:399px;width:20px"></div>
<div class="hdot" style="left:172px;top:443px;width:20px"></div>
<div class="hdot" style="left:172px;top:487px;width:20px"></div>
<svg class="a" style="left:74px;top:215px" width="18" height="18"><use href="#expDark"/></svg>
<svg class="a" style="left:117px;top:259px" width="18" height="18"><use href="#expDark"/></svg>
<svg class="a" style="left:117px;top:522px" width="18" height="18"><use href="#expLight"/></svg>
<svg class="a" style="left:74px;top:566px" width="18" height="18"><use href="#expLight"/></svg>
<svg class="a" style="left:74px;top:609px" width="18" height="18"><use href="#expLight"/></svg>
<svg class="a" style="left:107px;top:210px" width="38" height="28"><use href="#folderOpen"/></svg>
<svg class="a" style="left:151px;top:254px" width="38" height="28"><use href="#folderOpen"/></svg>
<svg class="a" style="left:151px;top:517px" width="34" height="28"><use href="#folder"/></svg>
<svg class="a" style="left:107px;top:561px" width="34" height="28"><use href="#folder"/></svg>
<svg class="a" style="left:107px;top:604px" width="34" height="28"><use href="#folder"/></svg>
<svg class="a" style="left:199px;top:294px" width="30" height="34"><use href="#book"/></svg>
<svg class="a" style="left:199px;top:338px" width="30" height="34"><use href="#book"/></svg>
<svg class="a" style="left:199px;top:382px" width="30" height="34"><use href="#book"/></svg>
<svg class="a" style="left:199px;top:426px" width="30" height="34"><use href="#book"/></svg>
<svg class="a" style="left:199px;top:470px" width="30" height="34"><use href="#book"/></svg>
<div class="t" style="left:150px;top:218px;font-size:14px;color:#333;letter-spacing:-0.384px">Module</div>
<div class="t" style="left:195px;top:262px;font-size:14px;color:#333;letter-spacing:-0.315px">Abaabul</div>
<div class="t" style="left:238px;top:306px;font-size:14px;color:#fff;letter-spacing:-0.237px">Boostada loo dirayo</div>
<div class="t" style="left:238px;top:350px;font-size:14px;color:#333;letter-spacing:-0.414px">Lacag</div>
<div class="t" style="left:238px;top:394px;font-size:14px;color:#333;transform:scaleX(0.9261);transform-origin:0 0">Macaamiisha</div>
<div class="t" style="left:238px;top:437px;font-size:14px;color:#333;letter-spacing:-0.099px">Ururada</div>
<div class="t" style="left:238px;top:471px;font-size:14px;color:#333;line-height:15.5px;letter-spacing:-0.3px">Wicitaanada<br>telefoonka</div>
<div class="t" style="left:194px;top:525px;font-size:14px;color:#333;letter-spacing:-0.359px">Bakhaar</div>
<div class="t" style="left:150px;top:569px;font-size:14px;color:#333;letter-spacing:-0.352px">Diiwaanada</div>
<div class="t" style="left:150px;top:612px;font-size:14px;color:#333;letter-spacing:-0.057px">Warbixinno</div>
<svg class="a" style="left:330px;top:878px" width="18" height="18"><circle cx="7" cy="7" r="5" fill="none" stroke="#1f5fc8" stroke-width="2.2"/><path d="M10.5 10.5L15.5 15.5" stroke="#1f5fc8" stroke-width="3" stroke-linecap="round"/></svg>
<div class="vdot" style="left:369px;top:521px;height:20px"></div>
<div class="grip" style="left:382px;top:176px;height:21px"></div>
<svg class="a" style="left:394px;top:168px" width="36" height="36"><use href="#greenArrow"/></svg>
<div class="t" style="left:438px;top:179px;font-size:16px;transform:scaleX(0.9166);transform-origin:0 0">Waxqabadyada</div>
<svg class="a" style="left:541px;top:184px" width="8" height="5"><path d="M0 0h7L3.5 4z" fill="#333"/></svg>
<div class="sep" style="left:561px;top:165px;height:43px"></div>
<svg class="a" style="left:570px;top:168px" width="36" height="36"><use href="#clock"/></svg>
<svg class="a" style="left:624px;top:178px" width="18" height="18"><use href="#circArrow"/></svg>
<div class="t" style="left:952px;top:174px;font-size:27px;color:#333;transform:scaleX(0.9613);transform-origin:0 0">Boostada loo dirayo</div>
<svg class="a" style="left:1491px;top:178px" width="18" height="18"><use href="#circArrow"/></svg>
<div class="a" style="left:1517px;top:163px;width:27px;height:83px;background:#f3f3f3;border:1px solid #c6c6c6"></div>
<svg class="a" style="left:1521px;top:166px" width="20" height="20"><rect x="1" y="1" width="12" height="14" fill="#e8eef8" stroke="#6a8cc8"/><path d="M3 4h2M3 6h2M3 8h2M3 10h2" stroke="#6a8cc8"/><rect x="7" y="4" width="12" height="15" rx="1" fill="#3f78cc" stroke="#2c5cb0"/><text x="13" y="16" font-family="Liberation Sans" font-weight="bold" font-size="11" fill="#fff" text-anchor="middle">?</text></svg>
<div class="t" style="left:1525.5px;top:197px;font-size:13px;writing-mode:vertical-rl;color:#444">Buugga</div>
<div class="a" style="left:375px;top:217px;width:1140px;height:679px;border:1px solid #cfcfcf"></div>
<div class="hl" style="left:376px;top:280px;width:1138px"></div>
<div class="a" style="left:392px;top:234px;width:433px;height:31px;border:1px solid #c8c8c8"></div>
<div class="t" style="left:394px;top:243px;font-size:14px;color:#333;letter-spacing:-0.344px">Raadinta miiska oo buuxa</div>
<svg class="a" style="left:803.5px;top:247px" width="10" height="6"><path d="M0 0h8.5L4.25 4.6z" fill="#5a5a5a"/></svg>
<div class="t" style="left:386px;top:297px;font-size:14px;color:#b8bcc4;letter-spacing:-0.278px">Jiid tiir u socota halkan si aad ugu soo ururiso</div>
<div class="hl" style="left:376px;top:324px;width:1138px"></div>
<div class="a" style="left:377px;top:326px;width:1085px;height:42px;background:#f5f5f5"></div>
<div class="a" style="left:376px;top:324px;width:1087px;height:2px;background:#c4c4c4"></div>
<div class="a" style="left:376px;top:324px;width:1px;height:244px;background:#c4c4c4"></div>
<div class="vl" style="left:1462px;top:324px;height:243px;background:#c8c8c8"></div>
<div class="hl" style="left:377px;top:368px;width:1085px;background:#c8c8c8"></div>
<div class="a" style="left:377px;top:369px;width:13px;height:197px;background:#f5f5f5"></div>
<div class="vl" style="left:390px;top:326px;height:240px;background:#d0d0d0"></div>
<div class="vl" style="left:538px;top:326px;height:42px;background:#d0d0d0"></div>
<div class="vl" style="left:625px;top:326px;height:42px;background:#d0d0d0"></div>
<div class="vl" style="left:713px;top:326px;height:42px;background:#d0d0d0"></div>
<div class="vl" style="left:838px;top:326px;height:42px;background:#d0d0d0"></div>
<div class="vl" style="left:963px;top:326px;height:42px;background:#d0d0d0"></div>
<div class="vl" style="left:1088px;top:326px;height:42px;background:#d0d0d0"></div>
<div class="vl" style="left:1175px;top:326px;height:42px;background:#d0d0d0"></div>
<div class="vl" style="left:1300px;top:326px;height:42px;background:#d0d0d0"></div>
<div class="t" style="left:393px;top:332px;font-size:14px;color:#333;letter-spacing:-0.353px">Shaqaale</div>
<div class="t" style="left:540px;top:332px;font-size:14px;color:#333;letter-spacing:-0.136px">Taariikhda</div>
<div class="t" style="left:627px;top:332px;font-size:14px;color:#333;letter-spacing:-0.225px">Nooca dirista</div>
<div class="t" style="left:715px;top:332px;font-size:14px;color:#333;letter-spacing:-0.420px">Xiriir</div>
<div class="t" style="left:840px;top:332px;font-size:14px;color:#333;letter-spacing:-0.036px">Qaataha</div>
<div class="t" style="left:965px;top:332px;font-size:14px;color:#333;letter-spacing:-0.400px">Mawduuca</div>
<div class="t" style="left:1090px;top:332px;font-size:14px;color:#333;transform:scaleX(0.9070);transform-origin:0 0">Qiimo</div>
<div class="t" style="left:1177px;top:332px;font-size:14px;color:#333;letter-spacing:-0.382px">Xaaladda</div>
<div class="t" style="left:1302px;top:332px;font-size:14px;color:#333;letter-spacing:-0.199px">Fiiro gaar ah</div>
<div class="a" style="left:391px;top:369px;width:1071px;height:43px;background:#d8effc"></div>
<div class="hl" style="left:391px;top:412px;width:1071px;background:#d0d0d0"></div>
<div class="hl" style="left:377px;top:434px;width:1085px;background:#d0d0d0"></div>
<div class="t" style="left:427px;top:384px;font-size:14px;color:#333;letter-spacing:-0.074px">Shaqaale #1</div>
<div class="t" style="left:542px;top:384px;font-size:14px;color:#333;letter-spacing:-0.042px">18.02.2022</div>
<svg class="a" style="left:631px;top:379px" width="12" height="19"><use href="#phone"/></svg>
<div class="t" style="left:649px;top:384px;font-size:14px;color:#333;transform:scaleX(0.8425);transform-origin:0 0">SMS</div>
<div class="t" style="left:717px;top:384px;font-size:14px;color:#333;letter-spacing:-0.230px">+99990000000</div>
<div class="t" style="left:840px;top:384px;font-size:14px;color:#333;letter-spacing:-0.364px">Macmiilka #5</div>
<div class="t" style="left:965px;top:384px;font-size:14px;color:#333;transform:scaleX(0.9130);transform-origin:0 0">Qiimo dhimis</div>
<div class="t" style="left:1100px;width:73px;text-align:right;top:384px;font-size:13.5px;color:#333">1,50</div>
<div class="t" style="left:1177px;top:384px;font-size:14px;color:#333;letter-spacing:0.032px">Diray</div>
<div class="t" style="left:415px;top:417px;font-size:14px;color:#ff6b6b;letter-spacing:-0.194px">Qoraal qaar</div>
<div class="a" style="left:391px;top:435px;width:1071px;height:43px;background:#fffca6"></div>
<div class="hl" style="left:391px;top:478px;width:1071px;background:#d0d0d0"></div>
<div class="hl" style="left:377px;top:500px;width:1085px;background:#d0d0d0"></div>
<div class="t" style="left:427px;top:450px;font-size:14px;color:#333;letter-spacing:-0.074px">Shaqaale #1</div>
<div class="t" style="left:542px;top:450px;font-size:14px;color:#333;letter-spacing:-0.042px">18.02.2022</div>
<svg class="a" style="left:631px;top:445px" width="12" height="19"><use href="#phone"/></svg>
<div class="t" style="left:649px;top:450px;font-size:14px;color:#333;transform:scaleX(0.8425);transform-origin:0 0">SMS</div>
<div class="t" style="left:717px;top:450px;font-size:14px;color:#333;letter-spacing:-0.230px">+77772222222</div>
<div class="t" style="left:840px;top:450px;font-size:14px;color:#333;letter-spacing:-0.364px">Macmiilka #5</div>
<div class="t" style="left:965px;top:450px;font-size:14px;color:#333;transform:scaleX(0.9130);transform-origin:0 0">Qiimo dhimis</div>
<div class="t" style="left:1100px;width:73px;text-align:right;top:450px;font-size:13.5px;color:#333">0,00</div>
<div class="t" style="left:1177px;top:450px;font-size:14px;color:#333;letter-spacing:-0.238px">Si aad u dirto</div>
<div class="t" style="left:415px;top:483px;font-size:14px;color:#ff6b6b;letter-spacing:-0.194px">Qoraal qaar</div>
<div class="a" style="left:391px;top:501px;width:1071px;height:43px;background:#e9b5b5"></div>
<div class="hl" style="left:391px;top:544px;width:1071px;background:#d0d0d0"></div>
<div class="hl" style="left:377px;top:566px;width:1085px;background:#d0d0d0"></div>
<div class="t" style="left:427px;top:516px;font-size:14px;color:#333;letter-spacing:-0.074px">Shaqaale #1</div>
<div class="t" style="left:542px;top:516px;font-size:14px;color:#333;letter-spacing:-0.042px">18.02.2022</div>
<svg class="a" style="left:631px;top:511px" width="12" height="19"><use href="#phone"/></svg>
<div class="t" style="left:649px;top:516px;font-size:14px;color:#333;transform:scaleX(0.8425);transform-origin:0 0">SMS</div>
<div class="t" style="left:717px;top:516px;font-size:14px;color:#333;letter-spacing:-0.230px">+79990000000</div>
<div class="t" style="left:840px;top:516px;font-size:14px;color:#333;letter-spacing:-0.364px">Macmiilka #7</div>
<div class="t" style="left:965px;top:516px;font-size:14px;color:#333;transform:scaleX(0.9130);transform-origin:0 0">Qiimo dhimis</div>
<div class="t" style="left:1100px;width:73px;text-align:right;top:516px;font-size:13.5px;color:#333">0,00</div>
<div class="t" style="left:1177px;top:516px;font-size:14px;color:#333;transform:scaleX(0.9209);transform-origin:0 0">Cilad</div>
<div class="t" style="left:1302px;top:516px;font-size:14px;color:#333;transform:scaleX(0.9238);transform-origin:0 0">Macmiilku ma jiro</div>
<div class="t" style="left:415px;top:549px;font-size:14px;color:#ff6b6b;letter-spacing:-0.194px">Qoraal qaar</div>
<div class="a" style="left:391px;top:369px;width:1071px;height:1px;background:repeating-linear-gradient(90deg,#222 0 1px,transparent 1px 2.5px,#6e6e6e 2.5px 3.5px,transparent 3.5px 5px)"></div>
<div class="a" style="left:391px;top:433px;width:1071px;height:1px;background:repeating-linear-gradient(90deg,#222 0 1px,transparent 1px 2.5px,#6e6e6e 2.5px 3.5px,transparent 3.5px 5px)"></div>
<div class="a" style="left:391px;top:369px;width:1px;height:65px;background:repeating-linear-gradient(180deg,#222 0 1px,transparent 1px 2.5px,#6e6e6e 2.5px 3.5px,transparent 3.5px 5px)"></div>
<div class="a" style="left:1461px;top:369px;width:1px;height:65px;background:repeating-linear-gradient(180deg,#222 0 1px,transparent 1px 2.5px,#6e6e6e 2.5px 3.5px,transparent 3.5px 5px)"></div>
<svg class="a" style="left:381px;top:397px" width="5" height="9"><path d="M0 0L4.5 4.5L0 9Z" fill="#555"/></svg>
<div class="a" style="left:376px;top:566px;width:1087px;height:2px;background:#c8c8c8"></div>
<div class="a" style="left:376px;top:849px;width:1087px;height:47px;background:#f5f5f5;border-top:1px solid #cdcdcd;border-bottom:2px solid #c8c8c8;border-right:1px solid #cdcdcd"></div>
<div class="a" style="left:1091px;top:853px;width:83px;height:38px;background:#fff;border:1px solid #cdcdcd"></div>
<div class="t" style="left:1100px;width:65px;text-align:right;top:866px;font-size:13.5px;color:#333">1,50</div>
<div class="hl" style="left:21px;top:907px;width:1529px;background:#cacaca"></div>
<div class="a" style="left:21px;top:907px;width:3px;height:5px;border-left:1px solid #cacaca;border-bottom:1px solid #cacaca"></div>
<div class="a" style="left:24px;top:908px;width:547px;height:52px;background:#f5f5f5;border-left:1px solid #c8c8c8;border-bottom:1px solid #c8c8c8"></div>
<div class="a" style="left:270px;top:909px;width:2px;height:50px;background:#c8c8c8"></div>
<div class="a" style="left:427px;top:909px;width:2px;height:50px;background:#c8c8c8"></div>
<div class="a" style="left:570px;top:907px;width:230px;height:56px;background:#fff;border-left:1px solid #c8c8c8;border-right:1px solid #c8c8c8;border-top:1px solid #c8c8c8"></div>
<div class="a" style="left:571px;top:960px;width:229px;height:3px;background:#12a3f0"></div>
<div class="a" style="left:800px;top:907px;width:750px;height:5px;border-bottom:1px solid #d0d0d0;border-right:1px solid #cacaca"></div>
<svg class="a" style="left:39px;top:920px" width="31" height="28"><use href="#winIcon"/></svg>
<div class="t" style="left:82px;top:927px;font-size:14px;color:#555;letter-spacing:-0.187px">Daahfurka degdega ah</div>
<div class="a" style="left:233px;top:924px;width:19px;height:19px;background:#fff"></div>
<div class="a" style="left:390px;top:924px;width:19px;height:19px;background:#fff"></div>
<div class="a" style="left:534px;top:924px;width:19px;height:19px;background:#fff"></div>
<svg class="a" style="left:237px;top:928px" width="12" height="11"><path d="M1 1L11 10M11 1L1 10" stroke="#1a9ee8" stroke-width="2.2"/></svg>
<svg class="a" style="left:394px;top:928px" width="12" height="11"><path d="M1 1L11 10M11 1L1 10" stroke="#1a9ee8" stroke-width="2.2"/></svg>
<svg class="a" style="left:538px;top:928px" width="12" height="11"><path d="M1 1L11 10M11 1L1 10" stroke="#1a9ee8" stroke-width="2.2"/></svg>
<svg class="a" style="left:767px;top:928px" width="12" height="11"><path d="M1 1L11 10M11 1L1 10" stroke="#1a9ee8" stroke-width="2.2"/></svg>
<svg class="a" style="left:286px;top:916px" width="30" height="34"><use href="#book"/></svg>
<div class="t" style="left:328px;top:927px;font-size:14px;color:#555;letter-spacing:-0.232px">Ururada</div>
<svg class="a" style="left:443px;top:916px" width="30" height="34"><use href="#book"/></svg>
<div class="t" style="left:485px;top:927px;font-size:14px;color:#555;letter-spacing:-0.414px">Lacag</div>
<svg class="a" style="left:587px;top:918px" width="30" height="34"><use href="#book"/></svg>
<div class="t" style="left:629px;top:928px;font-size:14px;color:#1a9ee8;letter-spacing:-0.204px">Boostada loo dirayo</div>
<svg class="a" style="left:28px;top:965px" width="21" height="21"><circle cx="10.5" cy="10.5" r="10" fill="#4a80c0"/><circle cx="10.5" cy="5.5" r="1.7" fill="#fff"/><rect x="9" y="8.5" width="3" height="8" fill="#fff"/></svg>
<div class="t" style="left:70px;top:970px;font-size:14px;color:#333;letter-spacing:-0.126px">7.3.9041.10 Professional</div>
<div class="vl" style="left:246px;top:966px;height:20px;background:#c8c8c8"></div>
<div class="vl" style="left:416px;top:966px;height:20px;background:#c8c8c8"></div>
<div class="vl" style="left:595px;top:966px;height:20px;background:#c8c8c8"></div>
<div class="vl" style="left:744px;top:966px;height:20px;background:#c8c8c8"></div>
<div class="vl" style="left:892px;top:966px;height:20px;background:#c8c8c8"></div>
<div class="vl" style="left:1519px;top:966px;height:20px;background:#c8c8c8"></div>
<svg class="a" style="left:260px;top:964px" width="18" height="21" viewBox="0 0 18 21"><defs><linearGradient id="gDB" x1="0" y1="0" x2="1" y2="0"><stop offset="0" stop-color="#fff6d6"/><stop offset="0.45" stop-color="#f2c850"/><stop offset="1" stop-color="#d8862e"/></linearGradient></defs><rect x="1.5" y="1.5" width="15" height="18.5" rx="2.8" fill="url(#gDB)" stroke="#c88432" stroke-width="1"/><path d="M2 9.2H16M2 14.2H16" stroke="#c8843a" stroke-width="1"/></svg>
<div class="t" style="left:299px;top:970px;font-size:14px;color:#333;letter-spacing:0.038px">localhost (utf8)</div>
<svg class="a" style="left:429px;top:965px" width="20" height="20"><use href="#user"/></svg>
<div class="t" style="left:469px;top:970px;font-size:14px;color:#333;transform:scaleX(0.9385);transform-origin:0 0">NIKOLAY (MAIN)</div>
<svg class="a" style="left:608px;top:966px" width="19" height="19"><rect x="0.5" y="0.5" width="18" height="18" fill="#fff" stroke="#5a6ab8"/><rect x="0.5" y="0.5" width="18" height="4" fill="#e05a4a"/><text x="9.5" y="16" font-family="Liberation Sans" font-weight="bold" font-size="10.5" fill="#334" text-anchor="middle">31</text></svg>
<div class="t" style="left:650px;top:970px;font-size:14px;color:#333;letter-spacing:0.014px">13.06.2024</div>
<div class="t" style="left:779px;top:970px;font-size:14px;color:#333;letter-spacing:0.141px">00:00:00:286</div>
<svg class="a" style="left:1533px;top:971px" width="14" height="14"><g fill="#666"><circle cx="11.5" cy="2" r="1.2"/><circle cx="6.5" cy="7" r="1.2"/><circle cx="11.5" cy="7" r="1.2"/><circle cx="1.5" cy="12" r="1.2"/><circle cx="6.5" cy="12" r="1.2"/><circle cx="11.5" cy="12" r="1.2"/></g></svg>
</body></html>
